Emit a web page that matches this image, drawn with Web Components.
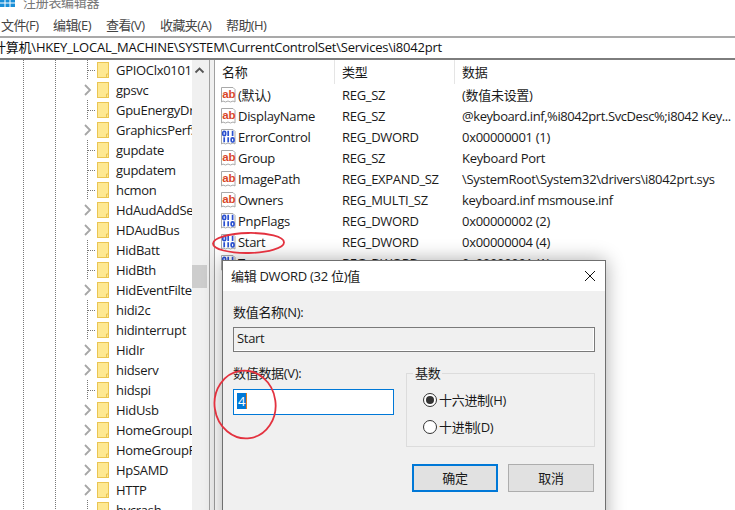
<!DOCTYPE html>
<html lang="zh"><head><meta charset="utf-8"><title>注册表编辑器</title>
<style>
html,body{margin:0;padding:0;background:#fff;overflow:hidden;height:510px}
body{font:13px/18px "Open Sans","Noto Sans CJK SC",sans-serif;letter-spacing:-.3px;color:#1a1a1a}
</style></head><body>
<reg-app></reg-app>
<script>
const sheetBase=':host{display:block;box-sizing:border-box}*{box-sizing:border-box}';
class Base extends HTMLElement{
  render(html){ if(!this.shadowRoot)this.attachShadow({mode:'open'}); this.shadowRoot.innerHTML=html; }
}
class RegIcon extends Base{connectedCallback(){
  const page='<path d="M1.5 .5h11.5l2 2v12.5l-2-1-2.5 1-2.5-1-2.5 1-2.5-1-1.500 1z" fill="#fff" stroke="#a9a9a9"/>';
  const inner=this.getAttribute('type')==='ab'
   ?'<text x="2.200" y="10.500" letter-spacing="0" font-family="Liberation Sans,sans-serif" font-weight="700" font-size="11.500" fill="#d9472a">ab</text>'
   :'<g fill="none" stroke="#2a50d0" stroke-width="1.700"><rect x="2.800" y="2.400" width="2.800" height="4.200" rx="1.200"/><path d="M8.200 1.800v5.300M12.600 1.800v5.300M4.200 8.300v5M8.200 8.300v5"/><rect x="11.200" y="8.800" width="2.800" height="4.200" rx="1.200"/></g>';
  this.render(`<style>:host{display:inline-block;width:16px;height:16px;flex:none}svg{display:block}</style><svg width="16" height="16" viewBox="0 0 16 16">${page}${inner}</svg>`);
}}
customElements.define('reg-icon',RegIcon);
class RegTreeRow extends Base{connectedCallback(){
  const exp=this.hasAttribute('expandable');
  this.render(`<style>${sheetBase}
  :host{height:20px;display:flex;align-items:center;padding-left:80px;white-space:nowrap}
  .t{width:15px;height:20px;display:flex;align-items:center;justify-content:flex-start;background:${exp?'#fff':'none'}}
  .stub{margin-left:8px;width:7px;height:1px;background:repeating-linear-gradient(to right,#777 0 1px,transparent 1px 2px)}
  svg{display:block}
  .f{margin-left:2px;margin-right:7px;flex:none}
  </style>
  <span class="t">${exp?'<svg width="15" height="12" viewBox="0 0 15 12"><path d="M5 1l5 5-5 5" fill="none" stroke="#a6a6a6" stroke-width="1.800"/></svg>':'<span class="stub"></span>'}</span>
  <svg class="f" width="12" height="16" viewBox="0 0 12 16"><rect x=".5" y=".5" width="11" height="15" fill="#fee892" stroke="#eac553"/><path d="M9.500 15.500v-3.500h2" fill="none" stroke="#eac553"/></svg>
  <slot></slot>`);
}}
customElements.define('reg-tree-row',RegTreeRow);
class RegTree extends Base{connectedCallback(){
  const names=[['GPIOClx0101',0],['gpsvc',1],['GpuEnergyDrv',0],['GraphicsPerfSvc',1],['gupdate',0],['gupdatem',0],['hcmon',0],['HdAudAddService',1],['HDAudBus',1],['HidBatt',0],['HidBth',0],['HidEventFilter',1],['hidi2c',0],['hidinterrupt',0],['HidIr',1],['hidserv',1],['hidspi',0],['HidUsb',1],['HomeGroupListener',1],['HomeGroupProvider',1],['HpSAMD',1],['HTTP',1],['hvcrash',0]];
  const dot='repeating-linear-gradient(to bottom,#777 0 1px,transparent 1px 2px)';
  this.render(`<style>${sheetBase}
  :host{width:192px;overflow:hidden;flex:none;background-image:${dot},${dot},${dot};background-size:1px 100%;background-repeat:no-repeat;background-position:23px 0,55px 0,87px 0}
  </style>${names.map(([n,e])=>`<reg-tree-row ${e?'expandable':''}>${n}</reg-tree-row>`).join('')}`);
}}
customElements.define('reg-tree',RegTree);
class RegScrollbar extends Base{connectedCallback(){
  this.render(`<style>${sheetBase}
  :host{width:17px;flex:none;background:#f0f0f0;display:flex;flex-direction:column}
  svg{display:block;margin:6px 0 0 2px}
  .thumb{width:15px;height:23px;background:#cdcdcd;margin-top:191px}
  </style><svg width="11" height="8" viewBox="0 0 11 8"><path d="M1.500 6.500l4-4 4 4" fill="none" stroke="#555" stroke-width="1.800"/></svg><div class="thumb"></div>`);
}}
customElements.define('reg-scrollbar',RegScrollbar);
class RegRow extends Base{connectedCallback(){
  const a=k=>this.getAttribute(k);
  const tight=this.hasAttribute('tight')?' style="letter-spacing:-.42px"':'';
  this.render(`<style>${sheetBase}
  :host{height:21px;display:grid;grid-template-columns:120px 120px 1fr;align-items:center;white-space:nowrap}
  .n{display:flex;align-items:center;gap:2px;padding-left:5px}
  .c{padding-left:7px;overflow:hidden}
  </style>
  <div class="n"><reg-icon type="${a('icon')}"></reg-icon><span>${a('name')}</span></div>
  <div class="c">${a('kind')}</div><div class="c"${tight}>${a('data')}</div>`);
}}
customElements.define('reg-row',RegRow);
class RegList extends Base{connectedCallback(){
  const S='REG_SZ',D='REG_DWORD';
  const rows=[['ab','(默认)',S,'(数值未设置)'],['ab','DisplayName',S,'@keyboard.inf,%i8042prt.SvcDesc%;i8042 Key...',1],['b','ErrorControl',D,'0x00000001 (1)'],['ab','Group',S,'Keyboard Port'],['ab','ImagePath','REG_EXPAND_SZ','\\SystemRoot\\System32\\drivers\\i8042prt.sys'],['ab','Owners','REG_MULTI_SZ','keyboard.inf msmouse.inf'],['b','PnpFlags',D,'0x00000002 (2)'],['b','Start',D,'0x00000004 (4)'],['b','Type',D,'0x00000001 (1)']];
  this.render(`<style>${sheetBase}
  :host{flex:1;min-width:0;overflow:hidden}
  .h{height:24px;display:grid;grid-template-columns:120px 120px 1fr;align-items:start}
  .h div{padding-left:7px;height:24px;line-height:25px;border-right:1px solid #e5e5e5}
  .h div:last-child{border:0}
  </style><div class="h"><div>名称</div><div>类型</div><div>数据</div></div>
  ${rows.map(r=>`<reg-row icon="${r[0]}" name="${r[1]}" kind="${r[2]}" data="${r[3]}" ${r[4]?'tight':''}></reg-row>`).join('')}`);
}}
customElements.define('reg-list',RegList);
class RegRadio extends Base{connectedCallback(){
  const on=this.hasAttribute('checked');
  this.render(`<style>${sheetBase}
  :host{height:27px;display:flex;align-items:center;gap:2px;white-space:nowrap}
  .r{width:14px;height:14px;border-radius:50%;border:1px solid #333;background:#fff;display:flex;align-items:center;justify-content:center;flex:none}
  .d{width:8px;height:8px;border-radius:50%;background:#333}
  </style><span class="r">${on?'<span class="d"></span>':''}</span><slot></slot>`);
}}
customElements.define('reg-radio',RegRadio);
class RegButton extends Base{connectedCallback(){
  const p=this.hasAttribute('primary');
  this.render(`<style>${sheetBase}
  :host{width:86px;height:28px;background:#e1e1e1;border:${p?'2px solid #0078d7':'1px solid #adadad'};display:flex;align-items:center;justify-content:center}
  </style><slot></slot>`);
}}
customElements.define('reg-button',RegButton);
class RegDialog extends Base{connectedCallback(){
  this.render(`<style>${sheetBase}
  :host{position:absolute;left:222px;top:260px;width:384px;height:270px;background:#f0f0f0;border:1px solid #6f6f6f;box-shadow:0 0 18px rgba(0,0,0,.33)}
  .title{height:30px;background:#fff;display:flex;align-items:center;justify-content:space-between;padding:0 9px 0 8px}
  .title svg{display:block}
  .body{padding:12px 10px 0}
  .box{height:25px;margin-top:6px;border:1px solid #7a7a7a;padding-left:3px;line-height:21px;box-shadow:inset -1px -1px 0 #fff}
  .cols{display:grid;grid-template-columns:161px 189px;gap:12px;margin-top:12px}
  .edit{height:26px;margin-top:7px;border:1px solid #0078d7;background:#fff;padding:2px 0 0 3px}
  .sel{display:inline-block;height:16px;line-height:16px;padding:0 1px;background:#0078d7;color:#fff;border-right:1px solid #e07b20}
  fieldset{margin:0;padding:0 16px 5px;border:1px solid #dcdcdc;min-width:0;height:83px}
  legend{padding:0 2px;margin-left:-10px;height:18px}
  .rad{padding-top:4px}
  .btns{display:flex;justify-content:flex-end;gap:10px;margin-top:17px;padding-right:1px}
  </style>
  <div class="title"><span>编辑 DWORD (32 位)值</span><svg width="12" height="12" viewBox="0 0 12 12"><path d="M1 1l10 10M11 1L1 11" stroke="#111" fill="none"/></svg></div>
  <div class="body">
    <div>数值名称(N):</div>
    <div class="box">Start</div>
    <div class="cols">
      <div><div>数值数据(V):</div><div class="edit"><span class="sel">4</span></div></div>
      <fieldset><legend>基数</legend><div class="rad"><reg-radio checked>十六进制(H)</reg-radio><reg-radio>十进制(D)</reg-radio></div></fieldset>
    </div>
    <div class="btns"><reg-button primary>确定</reg-button><reg-button>取消</reg-button></div>
  </div>`);
}}
customElements.define('reg-dialog',RegDialog);
class RegMarks extends Base{connectedCallback(){
  this.render(`<style>:host{position:absolute;left:0;top:0;width:735px;height:510px;pointer-events:none}svg{display:block}</style>
  <svg width="735" height="510" fill="none" stroke="#e3323f" stroke-width="1.800"><ellipse cx="248.500" cy="243" rx="35.500" ry="10" transform="rotate(-1 248 243)"/><ellipse cx="245" cy="404.500" rx="30.500" ry="34" transform="rotate(-8 245 404)"/></svg>`);
}}
customElements.define('reg-marks',RegMarks);
class RegApp extends Base{connectedCallback(){
  this.render(`<style>${sheetBase}
  :host{position:relative;width:735px;height:510px;overflow:hidden;display:flex;flex-direction:column}
  .tb{height:14px;flex:none;display:flex;gap:8px;overflow:hidden;align-items:flex-start;color:#777}
  .tb svg{flex:none;display:block}
  .tb span{line-height:4px}
  .menu{height:22px;flex:none;display:flex;align-items:center;padding-left:1px;color:#444;letter-spacing:-.6px}
  .menu span{white-space:nowrap}
  .addr{height:24px;flex:none;border-top:2px solid #a9a9a9;border-bottom:2px solid #7d7d7d;line-height:19px;white-space:nowrap;overflow:hidden;color:#111;letter-spacing:-.22px}
  .addr span{margin-left:-7px;display:inline-block}
  .main{flex:1;min-height:0;display:flex}
  .split{width:6px;flex:none;background:#f0f0f0;border-left:1px solid #a0a0a0;border-right:1px solid #a0a0a0}
  </style>
  <div class="tb"><svg width="15" height="7" viewBox="0 0 15 7"><rect width="15" height="7" fill="#1a8fd8"/><path d="M5 0v7M10 0v7M0 3h15" stroke="#fff"/></svg><span>注册表编辑器</span></div>
  <div class="menu"><span style="width:52px">文件(F)</span><span style="width:53px">编辑(E)</span><span style="width:54px">查看(V)</span><span style="width:66px">收藏夹(A)</span><span>帮助(H)</span></div>
  <div class="addr"><span>计算机\\HKEY_LOCAL_MACHINE\\SYSTEM\\CurrentControlSet\\Services\\i8042prt</span></div>
  <div class="main"><reg-tree></reg-tree><reg-scrollbar></reg-scrollbar><div class="split"></div><reg-list></reg-list></div>
  <reg-dialog></reg-dialog><reg-marks></reg-marks>`);
}}
customElements.define('reg-app',RegApp);
</script></body></html>
